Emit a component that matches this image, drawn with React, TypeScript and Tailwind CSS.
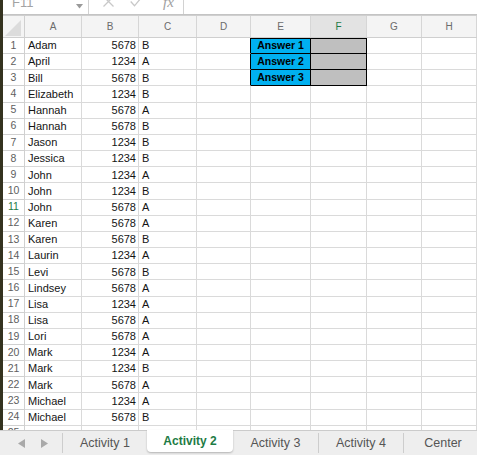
import React from "react";

type Row = [string, number, "A" | "B"];

const DATA: Row[] = [
    ["Adam", 5678, "B"],
    ["April", 1234, "A"],
    ["Bill", 5678, "B"],
    ["Elizabeth", 1234, "B"],
    ["Hannah", 5678, "A"],
    ["Hannah", 5678, "B"],
    ["Jason", 1234, "B"],
    ["Jessica", 1234, "B"],
    ["John", 1234, "A"],
    ["John", 1234, "B"],
    ["John", 5678, "A"],
    ["Karen", 5678, "A"],
    ["Karen", 5678, "B"],
    ["Laurin", 1234, "A"],
    ["Levi", 5678, "B"],
    ["Lindsey", 5678, "A"],
    ["Lisa", 1234, "A"],
    ["Lisa", 5678, "A"],
    ["Lori", 5678, "A"],
    ["Mark", 1234, "A"],
    ["Mark", 1234, "B"],
    ["Mark", 5678, "A"],
    ["Michael", 1234, "A"],
    ["Michael", 5678, "B"],
];

const COLS = ["A", "B", "C", "D", "E", "F", "G", "H"];
const GRID = "grid grid-cols-[22px_57px_57px_58px_54px_60px_56px_55px_55px]";
const CELL = "border-r border-b border-[#dadada]";
const GREEN = "text-[#1e7b45]";

function FormulaBar() {
    return (
        <div className="flex h-[15px] border-b border-[#c4c4c4] bg-white">
            <div className="flex w-[86px] items-start justify-between border-r border-[#d2d2d2] pr-[5px] pl-[9px]">
                <span className="-mt-[4px] text-[13px] leading-[14px] text-[#a3a3a3]">F11</span>
                <svg width="7" height="5" viewBox="0 0 7 5" className="mt-[4px]">
                    <polygon points="0,0 7,0 3.5,4.5" fill="#9a9a9a" />
                </svg>
            </div>
            <div className="flex w-[95px] items-start border-r border-[#d2d2d2] pl-[14px]">
                <svg width="11" height="11" viewBox="0 0 11 11" className="-mt-[4px]">
                    <path d="M0.5 0.5 L10.5 10.5 M10.5 0.5 L0.5 10.5" stroke="#c8c8c8" strokeWidth="1.3" />
                </svg>
                <svg width="13" height="11" viewBox="0 0 13 11" className="-mt-[4px] ml-[16px]">
                    <path d="M0.7 5.5 L4.5 9.8 L12.3 0.5" stroke="#c8c8c8" strokeWidth="1.3" fill="none" />
                </svg>
                <span className="-mt-[6px] ml-[20px] font-['Liberation_Serif',serif] text-[15px] leading-[16px] text-[#a0a0a0] italic">fx</span>
            </div>
        </div>
    );
}

function HeaderRow() {
    return (
        <div className={`${GRID} h-[23px] border-y border-[#cfcfcf] bg-[#f4f4f4] text-[10px] text-[#6b6b6b]`}>
            <div className="border-r border-[#cfcfcf]">
                <svg width="21" height="21" viewBox="0 0 21 21">
                    <polygon points="18,4 18,20 2,20" fill="#dcdcdc" />
                </svg>
            </div>
            {COLS.map((c) => (
                <div
                    key={c}
                    className={`flex items-center justify-center border-r border-[#d6d6d6] ${c === "F" ? `bg-[#e3e3e3] ${GREEN}` : ""}`}
                >
                    {c}
                </div>
            ))}
        </div>
    );
}

function Sheet() {
    const rows = [...DATA, null];
    return (
        <div className="flex-1 overflow-hidden">
            <HeaderRow />
            <div className={`${GRID} auto-rows-[16.17px] text-[11px] text-[#141414]`}>
                {rows.map((r, i) => {
                    const n = i + 1;
                    const answer = n <= 3;
                    const top = n === 1 ? "shadow-[inset_0_1px_0_#000]" : "";
                    return (
                        <React.Fragment key={n}>
                            <div
                                className={`flex items-center justify-center border-r border-b border-[#d0d0d0] text-[10.5px] ${
                                    n === 11 ? GREEN : "text-[#5e5e5e]"
                                }`}
                            >
                                {n}
                            </div>
                            <div className={`${CELL} flex items-center pl-[3px]`}>{r?.[0]}</div>
                            <div className={`${CELL} flex items-center justify-end pr-[2px]`}>{r?.[1]}</div>
                            <div className={`${CELL} flex items-center pl-[3px]`}>{r?.[2]}</div>
                            <div className={answer ? "border-r border-b border-r-black border-b-[#dadada]" : CELL} />
                            {answer ? (
                                <div
                                    className={`flex items-center justify-center border-r border-b border-black bg-[#00b0f0] text-[10.5px] font-bold text-black ${top}`}
                                >
                                    Answer {n}
                                </div>
                            ) : (
                                <div className={CELL} />
                            )}
                            <div className={answer ? `border-r border-b border-black bg-[#bfbfbf] ${top}` : CELL} />
                            <div className={CELL} />
                            <div className={CELL} />
                        </React.Fragment>
                    );
                })}
            </div>
        </div>
    );
}

function Tab({ label, active, w }: { label: string; active?: boolean; w: string }) {
    return (
        <div
            className={`flex shrink-0 items-center justify-center ${w} ${
                active
                    ? `-mt-px mb-[3px] rounded-b-[4px] bg-white text-[12px] font-bold ${GREEN} shadow-[0_1px_2px_rgba(0,0,0,0.25)]`
                    : "text-[12.5px] text-[#555]"
            }`}
        >
            {label}
        </div>
    );
}

function Sep() {
    return <div className="my-[2px] w-px shrink-0 bg-[#cdcdcd]" />;
}

function TabBar() {
    return (
        <div className="flex h-[25px] border-t border-[#cbcbcb] bg-[#eeeeee]">
            <div className="flex w-[62px] shrink-0 items-center gap-[16px] pl-[18px]">
                <svg width="7" height="9" viewBox="0 0 7 9">
                    <polygon points="7,0 7,9 0,4.5" fill="#a9a9a9" />
                </svg>
                <svg width="7" height="9" viewBox="0 0 7 9">
                    <polygon points="0,0 0,9 7,4.5" fill="#a9a9a9" />
                </svg>
            </div>
            <Sep />
            <Tab label="Activity 1" w="w-[84px]" />
            <Tab label="Activity 2" active w="w-[86px]" />
            <Tab label="Activity 3" w="w-[85px]" />
            <Sep />
            <Tab label="Activity 4" w="w-[84px]" />
            <Sep />
            <Tab label="Center" w="w-[78px]" />
        </div>
    );
}

export default function App() {
    return (
        <div className="flex h-[455px] w-[477px] flex-col overflow-hidden bg-white font-['Liberation_Sans',Arial,sans-serif]">
            <div className="flex min-h-0 flex-1">
                <div className="w-[3px] shrink-0 bg-[#34321f]" />
                <div className="flex min-w-0 flex-1 flex-col">
                    <FormulaBar />
                    <Sheet />
                </div>
            </div>
            <TabBar />
        </div>
    );
}
